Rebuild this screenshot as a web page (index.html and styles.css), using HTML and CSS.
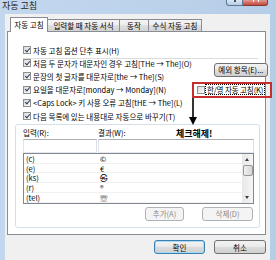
FILE: index.html
```html
<!DOCTYPE html>
<html>
<head>
  <meta charset="utf-8">
  <link rel="stylesheet" href="styles.css">
</head>
<body>
  <div class="window">
    <div class="titlebar">
      <div class="title">자동 고침</div>
      <div class="caption">
        <div class="cap cap-help"></div>
        <div class="cap cap-close"></div>
      </div>
    </div>

    <div class="client">
      <div class="tabs">
        <div class="tab active">자동 고침</div>
        <div class="tab">입력할 때 자동 서식</div>
        <div class="tab">동작</div>
        <div class="tab">수식 자동 고침</div>
      </div>

      <div class="panel">
        <div class="check-row"><span class="cb on"></span>자동 고침 옵션 단추 표시(H)</div>
        <div class="sep"></div>

        <div class="options">
          <div class="opt"><span class="cb on"></span>처음 두 문자가 대문자인 경우 고침[THe → The](O)</div>
          <div class="opt"><span class="cb on"></span>문장의 첫 글자를 대문자로[the → The](S)</div>
          <div class="opt"><span class="cb on"></span>요일을 대문자로[monday → Monday](N)</div>
          <div class="opt"><span class="cb on"></span>&lt;Caps Lock&gt; 키 사용 오류 고침[tHE → The](L)</div>
          <div class="opt"><span class="cb on"></span>다음 목록에 있는 내용대로 자동으로 바꾸기(T)</div>

          <button class="btn btn-exceptions">예외 항목(E)...</button>
          <div class="hanyoung"><span class="cb"></span><span class="focus">한/영 자동 고침(K)</span></div>
        </div>

        <div class="group">
          <div class="labels">
            <span class="label-in">입력(R):</span>
            <span>결과(W):</span>
          </div>
          <div class="inputs">
            <div class="field field-in"></div>
            <div class="field field-out"></div>
          </div>
          <div class="list">
            <div class="list-rows">
              <div class="list-row"><span class="key">(c)</span><span>©</span></div>
              <div class="list-row"><span class="key">(e)</span><span>€</span></div>
              <div class="list-row"><span class="key">(ks)</span><span>㉿</span></div>
              <div class="list-row"><span class="key">(r)</span><span>®</span></div>
              <div class="list-row"><span class="key">(tel)</span><span>☏</span></div>
            </div>
            <div class="scrollbar">
              <div class="sb-btn sb-up"></div>
              <div class="sb-thumb"></div>
              <div class="sb-track"></div>
              <div class="sb-btn sb-down"></div>
            </div>
          </div>
          <div class="list-actions">
            <button class="btn btn-add" disabled>추가(A)</button>
            <button class="btn btn-del" disabled>삭제(D)</button>
          </div>
        </div>

        <!-- annotation drawn over the dialog -->
        <svg class="note-arrow" width="10" height="28" viewBox="0 0 10 28">
          <line x1="5" y1="1" x2="5" y2="21" stroke="#000" stroke-width="1.6"/>
          <polygon points="1,20 9,20 5,28" fill="#000"/>
        </svg>
        <div class="note-text">체크해제!</div>
      </div>

      <div class="footer">
        <button class="btn btn-ok default">확인</button>
        <button class="btn btn-cancel">취소</button>
      </div>
    </div>
  </div>
</body>
</html>
```

FILE: styles.css
```css
body {
  margin: 0;
  font-family: "Noto Sans CJK KR", "Noto Sans", sans-serif;
  font-size: 7.5px;
  color: #000;
}

.window {
  width: 276px;
  height: 260px;
  box-sizing: border-box;
  padding: 0 6px 0 5px;
  background: linear-gradient(to right, #c3d8ef, #b6cde7);
  overflow: hidden;
}

/* title bar */

.titlebar {
  height: 14px;
  display: flex;
  justify-content: space-between;
  align-items: flex-start;
}

.title {
  font-size: 9px;
  line-height: 12px;
  margin-left: -3px;
  color: #1e1e1e;
}

.caption {
  display: flex;
  margin-right: 2px;
}

.cap {
  position: relative;
  height: 6px;
  box-sizing: border-box;
  border: 1px solid #5f7796;
  border-top: none;
}

.cap-help {
  width: 17px;
  background: linear-gradient(#dbe6f3, #b7cbe2);
  border-radius: 0 0 0 3px;
}

.cap-help::after {
  content: "";
  position: absolute;
  left: 7px;
  top: 0;
  width: 2px;
  height: 2px;
  background: #37506f;
}

.cap-close {
  width: 25px;
  background: linear-gradient(#e39a90, #c4473b);
  border-color: #8a3a34;
  border-left: none;
  border-radius: 0 0 3px 0;
}

.cap-close::after {
  content: "";
  position: absolute;
  left: 10px;
  top: 0;
  width: 4px;
  height: 2px;
  border-left: 1.5px solid #fff;
  border-right: 1.5px solid #fff;
}

/* client area */

.client {
  background: #f0f0f0;
  padding: 3px 4px 0 2px;
  height: 246px;
  box-sizing: border-box;
}

.tabs {
  display: flex;
  align-items: flex-end;
  height: 14px;
  padding-left: 3px;
}

.tab {
  height: 12px;
  box-sizing: border-box;
  border: 1px solid #898c95;
  border-bottom: none;
  margin-left: -1px;
  background: linear-gradient(#f4f4f4, #ececec 50%, #dfdfdf 50%, #d3d3d3);
  text-align: center;
  line-height: 11px;
  white-space: nowrap;
}

.tab:nth-child(1) { width: 38px; margin-left: 0; }
.tab:nth-child(2) { width: 73px; }
.tab:nth-child(3) { width: 30px; }
.tab:nth-child(4) { width: 54px; }

.tab.active {
  height: 15px;
  margin-bottom: -1px;
  background: #fff;
  position: relative;
  z-index: 2;
  line-height: 13px;
}

.panel {
  position: relative;
  z-index: 1;
  height: 204px;
  box-sizing: border-box;
  border: 1px solid #898c95;
  background: #fff;
  padding: 13px 3px 0 15px;
}

/* checkboxes */

.cb {
  position: relative;
  flex: none;
  width: 8px;
  height: 8px;
  box-sizing: border-box;
  border: 1px solid #8e8f8f;
  background: linear-gradient(135deg, #d9d9d9, #fbfbfb);
  margin-right: 2px;
}

.cb.on::after {
  content: "";
  position: absolute;
  left: 1.5px;
  top: -0.5px;
  width: 2px;
  height: 4px;
  border: solid #2c3c58;
  border-width: 0 1.3px 1.3px 0;
  transform: rotate(40deg);
}

.check-row {
  display: flex;
  align-items: center;
  height: 10px;
  white-space: nowrap;
}

.sep {
  height: 1px;
  background: #dcdcdc;
  margin: 3px 4px 0 0;
}

.options {
  display: grid;
  grid-template-columns: 1fr 80px;
  grid-template-rows: repeat(5, 13.25px);
  margin-top: -2.5px;
}

.opt {
  grid-column: 1;
  display: flex;
  align-items: center;
  white-space: nowrap;
}

/* buttons */

.btn {
  box-sizing: border-box;
  height: 14px;
  padding: 0;
  border: 1px solid #707070;
  border-radius: 3px;
  background: linear-gradient(#f2f2f2, #ebebeb 45%, #dddddd 50%, #cfcfcf);
  font: inherit;
  color: #000;
  display: flex;
  align-items: center;
  justify-content: center;
  white-space: nowrap;
}

.btn.default {
  border-color: #3c7fb1;
  box-shadow: inset 0 0 0 1px #a9d9f5;
}

.btn:disabled {
  border-color: #adb2b5;
  background: #f4f4f4;
  color: #8a8a8a;
}

.btn-exceptions {
  grid-column: 2;
  grid-row: 1 / span 2;
  justify-self: end;
  align-self: center;
  width: 54px;
  margin-right: 4px;
}

.hanyoung {
  grid-column: 2;
  grid-row: 3;
  align-self: center;
  height: 16px;
  box-sizing: border-box;
  border: 2px solid #c62e2e;
  display: flex;
  align-items: center;
  padding-left: 3px;
  white-space: nowrap;
}

.hanyoung .cb {
  margin-right: 1px;
}

.focus {
  outline: 1px dotted #000;
  padding: 0 1px;
  line-height: 9px;
  letter-spacing: -0.1px;
}

/* replacement list */

.group {
  margin: 1px 2px 0 -8px;
  border: 1px solid #d5dfe5;
  border-radius: 3px;
  padding: 3px 5px 6px 7px;
}

.labels {
  display: flex;
  height: 10px;
  line-height: 10px;
}

.label-in {
  width: 75px;
}

.inputs {
  display: flex;
  gap: 1px;
  margin-top: 1px;
}

.field {
  height: 14px;
  box-sizing: border-box;
  border: 1px solid;
  border-color: #abadb3 #dbdfe6 #e3e9ef #e2e3ea;
  background: #fff;
}

.field-in {
  width: 74px;
}

.field-out {
  flex: 1;
}

.list {
  display: flex;
  height: 51px;
  box-sizing: border-box;
  border: 1px solid #828790;
  overflow: hidden;
}

.list-rows {
  flex: 1;
}

.list-row {
  display: flex;
  height: 9.8px;
  line-height: 9.8px;
  box-sizing: border-box;
  border-bottom: 1px solid #f1f1f1;
}

.key {
  width: 76px;
  box-sizing: border-box;
  padding-left: 2px;
}

.scrollbar {
  width: 11px;
  display: flex;
  flex-direction: column;
  background: linear-gradient(to right, #e8e8e8, #f5f5f5);
}

.sb-btn {
  position: relative;
  height: 10px;
}

.sb-up::before,
.sb-down::before {
  content: "";
  position: absolute;
  left: 3px;
  border: 2.5px solid transparent;
}

.sb-up::before {
  top: 2px;
  border-bottom: 3px solid #3b3b3b;
}

.sb-down::before {
  bottom: 2px;
  border-top: 3px solid #3b3b3b;
}

.sb-thumb {
  height: 11px;
  margin: 1px 0 0 1px;
  box-sizing: border-box;
  border: 1px solid #979797;
  border-radius: 2px;
  background: linear-gradient(to right, #f3f3f3, #e2e2e2 50%, #d6d6d6);
}

.sb-track {
  flex: 1;
}

.list-actions {
  display: flex;
  justify-content: flex-end;
  gap: 18px;
  margin: 3px 1px 0 0;
}

.btn-add { width: 39px; }
.btn-del { width: 51px; }

/* annotation */

.note-arrow {
  position: absolute;
  left: 180px;
  top: 65px;
}

.note-text {
  position: absolute;
  left: 168px;
  top: 97px;
  font-size: 9px;
  font-weight: bold;
  line-height: 10px;
  white-space: nowrap;
}

/* dialog buttons */

.footer {
  display: flex;
  justify-content: flex-end;
  gap: 9px;
  margin-top: 5px;
}

.btn-ok { width: 51px; }
.btn-cancel { width: 52px; }
```
